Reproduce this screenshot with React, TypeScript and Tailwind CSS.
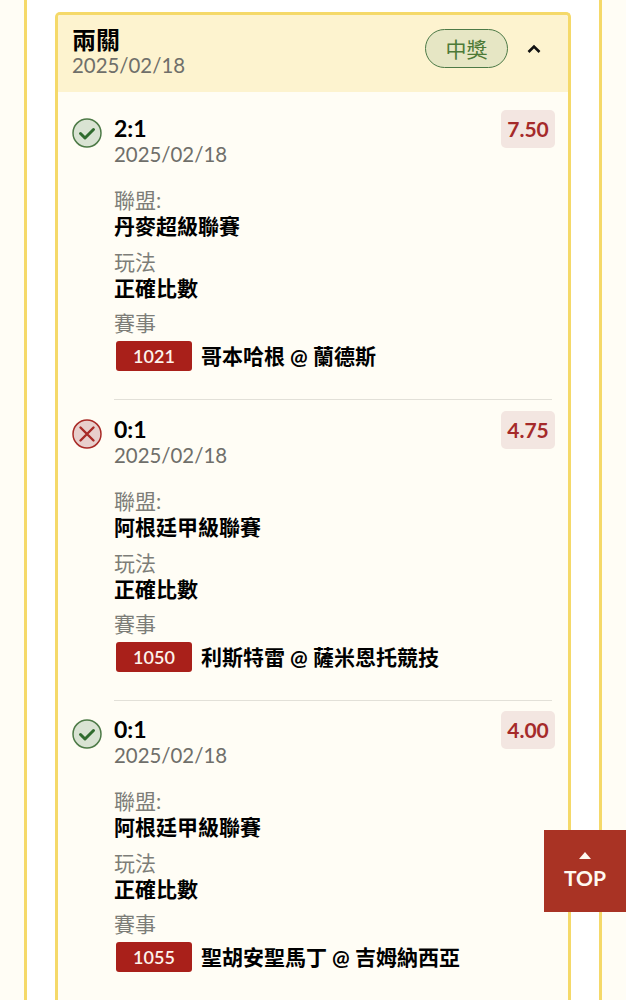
const fontStack = "font-['Lato','Noto_Sans_CJK_TC',sans-serif]"

type Bet = {
  score: string
  odds: string
  league: string
  code: string
  match: string
  won: boolean
}

const bets: Bet[] = [
  { score: "2:1", odds: "7.50", league: "丹麥超級聯賽", code: "1021", match: "哥本哈根 @ 蘭德斯", won: true },
  { score: "0:1", odds: "4.75", league: "阿根廷甲級聯賽", code: "1050", match: "利斯特雷 @ 薩米恩托競技", won: false },
  { score: "0:1", odds: "4.00", league: "阿根廷甲級聯賽", code: "1055", match: "聖胡安聖馬丁 @ 吉姆納西亞", won: true },
]

function StatusIcon({ won }: { won: boolean }) {
  if (won) {
    return (
      <svg width="30" height="30" viewBox="0 0 30 30" className="shrink-0">
        <circle cx="15" cy="15" r="14" fill="#d9e3d3" stroke="#4d7a47" strokeWidth="1.5" />
        <path d="M8.5 15.5l4.5 4.5 8.5-8.5" fill="none" stroke="#2f6b2e" strokeWidth="3" strokeLinecap="round" strokeLinejoin="round" />
      </svg>
    )
  }
  return (
    <svg width="30" height="30" viewBox="0 0 30 30" className="shrink-0">
      <circle cx="15" cy="15" r="14" fill="#e8cfcc" stroke="#a82a26" strokeWidth="1.5" />
      <path d="M8.5 8.5l13 13M21.5 8.5l-13 13" fill="none" stroke="#a82a26" strokeWidth="2.4" strokeLinecap="round" />
    </svg>
  )
}

function BetRow({ bet }: { bet: Bet }) {
  return (
    <div className="relative pt-[5px] pl-[42px]">
      <div className="absolute left-0 top-[8px]">
        <StatusIcon won={bet.won} />
      </div>
      <div className="absolute right-0 top-0 flex h-[38px] w-[54px] items-center justify-center rounded-[5px] bg-[#f3e6e1] text-[21px] font-bold text-[#a52a2a]">
        {bet.odds}
      </div>
      <div className="text-[23px] leading-[27px] font-bold text-black">{bet.score}</div>
      <div className="text-[20.4px] leading-[25px] text-[#6f6f6a]">2025/02/18</div>
      <div className="mt-[20px] text-[21px] leading-[26px] text-[#7d7d78]">聯盟:</div>
      <div className="text-[21px] leading-[26px] font-bold text-black">{bet.league}</div>
      <div className="mt-[10px] text-[21px] leading-[26px] text-[#7d7d78]">玩法</div>
      <div className="text-[21px] leading-[26px] font-bold text-black">正確比數</div>
      <div className="mt-[9px] text-[21px] leading-[26px] text-[#7d7d78]">賽事</div>
      <div className="mt-[5px] flex h-[30px] items-center pl-[2px]">
        <span className="flex h-[30px] w-[76px] items-center justify-center rounded-[3px] bg-[#a9201a] text-[18px] leading-[30px] font-semibold text-[#fdf3ec]">
          {bet.code}
        </span>
        <span className="ml-[9px] text-[21px] leading-[30px] font-bold text-black">{bet.match}</span>
      </div>
      <div className="mt-[28px] mr-[3px] mb-[10.5px] h-px bg-[#e2e0d8]" />
    </div>
  )
}

export default function App() {
  return (
    <div className={`relative h-screen overflow-hidden bg-[#fffdf5] px-[24px] ${fontStack}`}>
      <div className="min-h-full border-x-[3px] border-[#f5d969] bg-white px-[28px] pt-[12px]">
        <div className="overflow-hidden rounded-[5px] border-[3px] border-b-0 border-[#f5d969] bg-[#fffdf5]">
          <div className="flex h-[77px] items-start justify-between bg-[#fdf3cf] pr-[27px] pl-[14px]">
            <div className="pt-[11px]">
              <div className="text-[24px] leading-[27px] font-bold text-black">兩關</div>
              <div className="text-[20.4px] leading-[24px] text-[#6f6f6a]">2025/02/18</div>
            </div>
            <div className="flex items-center gap-[19px] pt-[14px]">
              <span className="flex h-[39px] w-[83px] items-center justify-center rounded-full border-[1.5px] border-[#4d7a47] bg-[#e6e6c4] text-[21px] text-[#4d7a37]">
                中獎
              </span>
              <svg width="14" height="10" viewBox="0 0 14 10">
                <path d="M1.5 8L7 2.5 12.5 8" fill="none" stroke="#111" strokeWidth="2.6" />
              </svg>
            </div>
          </div>
          <div className="pt-[18px] pr-[13px] pl-[14px]">
            {bets.map((bet) => (
              <BetRow key={bet.code} bet={bet} />
            ))}
          </div>
        </div>
      </div>

      <button className="absolute top-[830px] right-0 flex h-[82px] w-[82px] flex-col items-center justify-center bg-[#a93324] text-[21px] leading-[24px] font-bold text-[#fff8f0]">
        <svg width="12" height="7" viewBox="0 0 12 7" className="mb-[7px]">
          <path d="M6 0l6 7H0z" fill="#fff8f0" />
        </svg>
        TOP
      </button>
    </div>
  )
}
